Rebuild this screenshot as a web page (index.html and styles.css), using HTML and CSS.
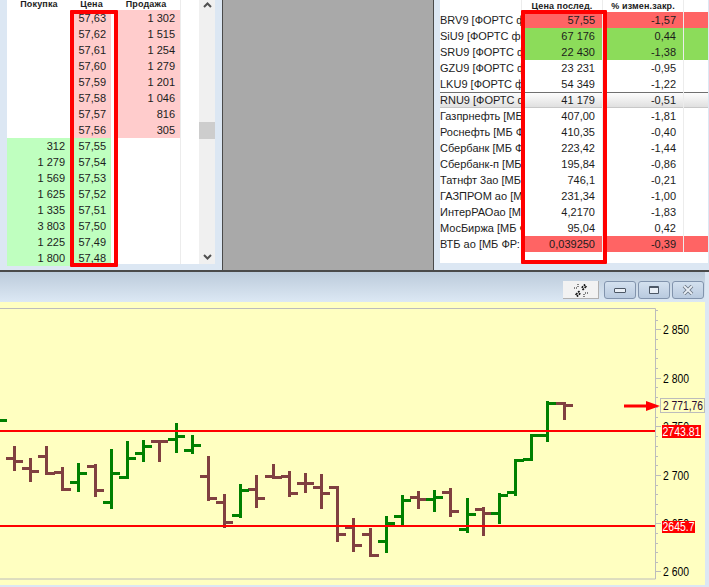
FILE: index.html
```html
<!DOCTYPE html>
<html lang="ru">
<head>
    <meta charset="UTF-8">
    <title>Торговый терминал</title>
    <link rel="stylesheet" href="styles.css">
</head>
<body>
<div class="top">
    <div class="book">
        <div class="book-table">
            <div class="book-head"><span>Покупка</span><span>Цена</span><span>Продажа</span></div>
            <div class="book-row ask"><span></span><span class="price">57,63</span><span class="sell">1 302</span></div>
            <div class="book-row ask"><span></span><span class="price">57,62</span><span class="sell">1 515</span></div>
            <div class="book-row ask"><span></span><span class="price">57,61</span><span class="sell">1 254</span></div>
            <div class="book-row ask"><span></span><span class="price">57,60</span><span class="sell">1 279</span></div>
            <div class="book-row ask"><span></span><span class="price">57,59</span><span class="sell">1 201</span></div>
            <div class="book-row ask"><span></span><span class="price">57,58</span><span class="sell">1 046</span></div>
            <div class="book-row ask"><span></span><span class="price">57,57</span><span class="sell">816</span></div>
            <div class="book-row ask"><span></span><span class="price">57,56</span><span class="sell">305</span></div>
            <div class="book-row bid"><span class="buy">312</span><span class="price">57,55</span><span></span></div>
            <div class="book-row bid"><span class="buy">1 279</span><span class="price">57,54</span><span></span></div>
            <div class="book-row bid"><span class="buy">1 569</span><span class="price">57,53</span><span></span></div>
            <div class="book-row bid"><span class="buy">1 625</span><span class="price">57,52</span><span></span></div>
            <div class="book-row bid"><span class="buy">1 335</span><span class="price">57,51</span><span></span></div>
            <div class="book-row bid"><span class="buy">3 803</span><span class="price">57,50</span><span></span></div>
            <div class="book-row bid"><span class="buy">1 225</span><span class="price">57,49</span><span></span></div>
            <div class="book-row bid"><span class="buy">1 800</span><span class="price">57,48</span><span></span></div>
        </div>
        <div class="scrollbar">
            <svg class="chevron" viewBox="0 0 9 6"><path d="M1 5L4.5 1.5L8 5"/></svg>
            <div class="thumb"></div>
            <svg class="chevron chevron-down" viewBox="0 0 9 6"><path d="M1 1L4.5 4.5L8 1"/></svg>
        </div>
        <div class="red-box red-box-book"></div>
    </div>

    <div class="empty-area"></div>

    <div class="quotes">
        <div class="quotes-table">
            <div class="quote-head"><span></span><span>Цена послед.</span><span>% измен.закр.</span><span></span></div>
            <div class="quote-row down"><span class="name">BRV9 [ФОРТС ф</span><span class="num">57,55</span><span class="num">-1,57</span><span></span></div>
            <div class="quote-row up"><span class="name">SiU9 [ФОРТС фь</span><span class="num">67 176</span><span class="num">0,44</span><span></span></div>
            <div class="quote-row up"><span class="name">SRU9 [ФОРТС ф</span><span class="num">22 430</span><span class="num">-1,38</span><span></span></div>
            <div class="quote-row"><span class="name">GZU9 [ФОРТС ф</span><span class="num">23 231</span><span class="num">-0,95</span><span></span></div>
            <div class="quote-row"><span class="name">LKU9 [ФОРТС ф</span><span class="num">54 349</span><span class="num">-1,22</span><span></span></div>
            <div class="quote-row selected"><span class="name">RNU9 [ФОРТС ф</span><span class="num">41 179</span><span class="num">-0,51</span><span></span></div>
            <div class="quote-row"><span class="name">Газпрнефть [МБ</span><span class="num">407,00</span><span class="num">-1,81</span><span></span></div>
            <div class="quote-row"><span class="name">Роснефть [МБ Ф</span><span class="num">410,35</span><span class="num">-0,40</span><span></span></div>
            <div class="quote-row"><span class="name">Сбербанк [МБ Ф</span><span class="num">223,42</span><span class="num">-1,44</span><span></span></div>
            <div class="quote-row"><span class="name">Сбербанк-п [МБ</span><span class="num">195,84</span><span class="num">-0,86</span><span></span></div>
            <div class="quote-row"><span class="name">Татнфт 3ао [МБ</span><span class="num">746,1</span><span class="num">-0,21</span><span></span></div>
            <div class="quote-row"><span class="name">ГАЗПРОМ ао [М</span><span class="num">231,34</span><span class="num">-1,00</span><span></span></div>
            <div class="quote-row"><span class="name">ИнтерРАОао [М</span><span class="num">4,2170</span><span class="num">-1,83</span><span></span></div>
            <div class="quote-row"><span class="name">МосБиржа [МБ Ф</span><span class="num">95,04</span><span class="num">0,42</span><span></span></div>
            <div class="quote-row down"><span class="name">ВТБ ао [МБ ФР: Т</span><span class="num">0,039250</span><span class="num">-0,39</span><span></span></div>
        </div>
        <div class="red-box red-box-quotes"></div>
    </div>
</div>

<div class="chart-window">
    <div class="caption">
        <button class="win-btn link-btn">
            <svg viewBox="0 0 14 13" width="14" height="13">
                <path class="link-broken" d="M5.5 7L2 10.5L3.5 12L7 8.5M8.5 6L12 2.5L10.5 1L7 4.5"/>
                <path class="link-rays" d="M4 0V3M0 4H3M10 13V10M14 9H11"/>
            </svg>
        </button>
        <button class="win-btn"><span class="glyph-min"></span></button>
        <button class="win-btn"><span class="glyph-max"></span></button>
        <button class="win-btn">
            <svg viewBox="0 0 12 10" width="12" height="10">
                <path class="glyph-close-edge" d="M2 1L10 9M10 1L2 9"/>
                <path class="glyph-close" d="M2 1L10 9M10 1L2 9"/>
            </svg>
        </button>
    </div>
    <svg class="chart" viewBox="0 302 705 283" width="705" height="283">
        <path class="frame" d="M0 308.5H655.5V579H0"/>
        <path class="frame" d="M655 310.5H658M655 320.5H658M655 329.5H661M655 339.5H658M655 349.5H658M655 358.5H658M655 368.5H658M655 378.5H661M655 387.5H658M655 397.5H658M655 407.5H658M655 417.5H658M655 426.5H661M655 436.5H658M655 446.5H658M655 456.5H658M655 465.5H658M655 475.5H661M655 485.5H658M655 494.5H658M655 504.5H658M655 514.5H658M655 523.5H661M655 533.5H658M655 543.5H658M655 552.5H658M655 562.5H658M655 571.5H661"/>
        <text class="axis" x="663" y="334" textLength="26" lengthAdjust="spacingAndGlyphs">2 850</text>
        <text class="axis" x="663" y="383" textLength="26" lengthAdjust="spacingAndGlyphs">2 800</text>
        <text class="axis" x="663" y="431" textLength="26" lengthAdjust="spacingAndGlyphs">2 750</text>
        <text class="axis" x="663" y="480" textLength="26" lengthAdjust="spacingAndGlyphs">2 700</text>
        <text class="axis" x="663" y="528" textLength="26" lengthAdjust="spacingAndGlyphs">2 650</text>
        <text class="axis" x="663" y="576" textLength="26" lengthAdjust="spacingAndGlyphs">2 600</text>

        <!-- падающие бары -->
        <path class="bar bar-down" d="M14.5 447V470M7.5 458.5H14.5M14.5 461.5H21.5
            M30.5 459V481M23.5 468.5H30.5M30.5 471.5H37.5
            M46.5 447V474M39.5 456.5H46.5M46.5 473.5H53.5
            M62.5 468V490M55.5 472.5H62.5M62.5 489.5H69.5
            M95.5 465V496M88.5 466.5H95.5M95.5 490.5H102.5
            M159.5 441V461M152.5 441.5H159.5M159.5 441.5H166.5
            M208.5 457V500M201.5 476.5H208.5M208.5 498.5H215.5
            M224.5 495V527M217.5 502.5H224.5M224.5 522.5H231.5
            M256.5 476V507M249.5 489.5H256.5M256.5 498.5H263.5
            M273.5 465V478M266.5 476.5H273.5M273.5 477.5H280.5
            M289.5 472V496M282.5 476.5H289.5M289.5 493.5H296.5
            M305.5 474V492M298.5 483.5H305.5M305.5 483.5H312.5
            M321.5 475V508M314.5 487.5H321.5M321.5 493.5H328.5
            M337.5 487.5V541M330.5 487.5H337.5M337.5 534.5H344.5
            M353.5 519V551M346.5 527.5H353.5M353.5 545.5H360.5
            M370.5 529V556M363.5 534.5H370.5M370.5 555.5H377.5
            M418.5 492V508M411.5 497.5H418.5M418.5 499.5H425.5
            M450.5 489V516M443.5 492.5H450.5M450.5 511.5H457.5
            M483.5 508V535M476.5 509.5H483.5M483.5 513.5H490.5
            M564.5 403.5V419M557.5 403.5H564.5M564.5 405.5H571.5"/>
        <!-- растущие бары -->
        <path class="bar bar-up" d="M-2 420.5H5.5
            M78.5 464V491M71.5 482.5H78.5M78.5 473.5H85.5
            M111.5 450V508M104.5 502.5H111.5M111.5 473.5H118.5
            M127.5 442V478M120.5 477.5H127.5M127.5 458.5H134.5
            M143.5 441V461M136.5 453.5H143.5M143.5 446.5H150.5
            M176.5 424V452M169.5 439.5H176.5M176.5 436.5H183.5
            M192.5 436V453M185.5 450.5H192.5M192.5 445.5H199.5
            M240.5 485V517M233.5 515.5H240.5M240.5 490.5H247.5
            M386.5 517V552M379.5 541.5H386.5M386.5 523.5H393.5
            M402.5 496V525M395.5 516.5H402.5M402.5 500.5H409.5
            M434.5 491V511M427.5 499.5H434.5M434.5 497.5H441.5
            M467.5 499V532M460.5 529.5H467.5M467.5 514.5H474.5
            M499.5 494V523M492.5 513.5H499.5M499.5 495.5H506.5
            M515.5 460.5V495M508.5 492.5H515.5M515.5 460.5H522.5
            M531.5 435.5V459.5M524.5 459.5H531.5M531.5 435.5H538.5
            M547.5 402.5V441M540.5 435.5H547.5M547.5 403.5H554.5"/>

        <path class="level" d="M0 431H655M0 526H655"/>

        <rect class="tag" x="662" y="425" width="39" height="13"/>
        <text class="tag-text" x="662.5" y="436" textLength="38" lengthAdjust="spacingAndGlyphs">2743.81</text>
        <rect class="tag" x="662" y="521" width="33" height="12"/>
        <text class="tag-text" x="662.5" y="531" textLength="32" lengthAdjust="spacingAndGlyphs">2645.7</text>

        <rect class="last-box" x="660.5" y="398.5" width="44" height="14"/>
        <text class="last-text" x="663" y="410" textLength="40" lengthAdjust="spacingAndGlyphs">2 771,76</text>

        <path class="arrow" d="M624 404.5H646V401L660 406L646 411V407.5H624Z"/>
    </svg>
</div>
</body>
</html>
```

FILE: styles.css
```css
html, body {
  margin: 0;
  padding: 0;
}

body {
  width: 709px;
  height: 587px;
  overflow: hidden;
  background: #dce7f3;
  font-family: "Liberation Sans", Arial, sans-serif;
  font-size: 11px;
  color: #1c1c1c;
}

.top {
  display: flex;
  height: 270px;
  border-bottom: 2px solid #4a4a4a;
}

/* стакан */
.book {
  position: relative;
  display: flex;
  width: 223px;
  height: 270px;
  box-sizing: border-box;
  padding: 0 7px 6px;
  background: #dce7f3;
  border-right: 1px solid #4a4a4a;
  flex: none;
}

.book-table {
  width: 192px;
  background: #fff;
  background-image: linear-gradient(#ececec, #ececec);
  background-size: 1px 100%;
  background-position: 173px 0;
  background-repeat: no-repeat;
  flex: none;
}

.book-head {
  display: grid;
  grid-template-columns: 64px 41px 68px;
  height: 10px;
  font-size: 9px;
  font-weight: bold;
  letter-spacing: 0.15px;
  line-height: 8px;
  text-align: center;
  overflow: hidden;
}

.book-row {
  display: grid;
  grid-template-columns: 63px 41px 69px;
  height: 16px;
  line-height: 16px;
}

.book-row .buy {
  padding-right: 5px;
  text-align: right;
}

.book-row .price {
  padding-right: 5px;
  text-align: right;
}

.book-row .sell {
  margin-left: 3px;
  padding-right: 5px;
  text-align: right;
}

.ask .price,
.ask .sell {
  background: #ffcccc;
}

.bid .buy,
.bid .price {
  background: #bfffbf;
}

.scrollbar {
  display: flex;
  flex-direction: column;
  align-items: center;
  width: 16px;
  background: #f0f0f0;
  flex: none;
  position: relative;
}

.chevron {
  width: 9px;
  height: 6px;
  margin-top: 2px;
  fill: none;
  stroke: #505050;
  stroke-width: 2;
}

.thumb {
  width: 100%;
  height: 17px;
  margin-top: 114px;
  background: #cdcdcd;
}

.chevron-down {
  margin-top: auto;
  margin-bottom: 4px;
}

.red-box {
  position: absolute;
  box-sizing: border-box;
  border: 4px solid #ff0000;
  border-radius: 1px;
  pointer-events: none;
}

.red-box-book {
  left: 70px;
  top: 10px;
  width: 48px;
  height: 257px;
}

.empty-area {
  width: 210px;
  background: #a9a9a9;
  flex: none;
}

/* котировки */
.quotes {
  position: relative;
  flex: 1;
  box-sizing: border-box;
  padding: 0 1px 7px 6px;
  background: #dce7f3;
  border-left: 1px solid #4a4a4a;
}

.quotes-table {
  height: 100%;
  background: #fff;
}

.quote-head,
.quote-row {
  display: grid;
  grid-template-columns: 81px 81px 81px 25px;
}

.quote-head {
  height: 12px;
  font-size: 9px;
  font-weight: bold;
  letter-spacing: 0.15px;
  line-height: 12px;
  text-align: center;
}

.quote-head span + span,
.quote-row span + span {
  border-left: 1px solid #ececec;
}

.quote-row {
  height: 16px;
  line-height: 16px;
}

.quote-row .name {
  overflow: hidden;
  white-space: nowrap;
}

.quote-row .num {
  padding-right: 7px;
  text-align: right;
}

.down span + span {
  background: #ff6464;
}

.up span + span {
  background: #8cdc5a;
}

.selected {
  background: linear-gradient(#fff, #dedede);
  box-shadow: inset 0 1px 0 #707070, inset 0 -1px 0 #c8c8c8;
}

.red-box-quotes {
  left: 87px;
  top: 10px;
  width: 86px;
  height: 254px;
}

/* окно графика */
.chart-window {
  width: 705px;
}

.caption {
  display: flex;
  justify-content: flex-end;
  align-items: center;
  gap: 2px;
  height: 30px;
  box-sizing: border-box;
  padding: 9px 1px 3px 0;
  background: linear-gradient(#bccbdb, #dce8f4);
}

.win-btn {
  display: flex;
  align-items: center;
  justify-content: center;
  width: 32px;
  height: 18px;
  margin: 0;
  padding: 0;
  background: linear-gradient(#d4e1ef, #b9cadf);
  border: 1px solid #8294ad;
  border-radius: 3px;
}

.link-btn {
  width: 36px;
  margin-right: 3px;
  background: #f2f2f2;
  border: 0;
  border-radius: 0;
  box-shadow: inset -1px -1px 0 #b0b0b0;
}

.link-broken {
  fill: none;
  stroke: #111;
  stroke-width: 1.6;
  stroke-dasharray: 2 1;
}

.link-rays {
  fill: none;
  stroke: #111;
  stroke-width: 1;
  stroke-dasharray: 1 1;
}

.glyph-min {
  width: 10px;
  height: 3px;
  background: #e9eff6;
  border: 1px solid #4d5866;
  border-radius: 1px;
}

.glyph-max {
  width: 8px;
  height: 5px;
  background: #e9eff6;
  border: 1px solid #4d5866;
  border-width: 2px 1px 1px;
  border-radius: 1px;
  box-sizing: content-box;
}

.glyph-close-edge {
  fill: none;
  stroke: #6d7885;
  stroke-width: 3.6;
}

.glyph-close {
  fill: none;
  stroke: #e8eef5;
  stroke-width: 1.8;
}

.chart {
  display: block;
  background: #ffffc1;
}

.frame {
  fill: none;
  stroke: #bcbcbc;
  stroke-width: 1;
}

.axis {
  font-size: 13px;
  fill: #000;
}

.bar {
  fill: none;
  stroke-width: 3;
  stroke-linecap: round;
  shape-rendering: crispEdges;
}

.bar-down {
  stroke: #804040;
}

.bar-up {
  stroke: #008000;
}

.level {
  fill: none;
  stroke: #ff0000;
  stroke-width: 2;
}

.tag {
  fill: #ff0000;
}

.tag-text {
  font-size: 13px;
  fill: #fff;
}

.last-box {
  fill: #ffffc1;
  stroke: #bcbcbc;
}

.last-text {
  font-size: 13px;
  fill: #2b0a30;
}

.arrow {
  fill: #ff0000;
}
```
